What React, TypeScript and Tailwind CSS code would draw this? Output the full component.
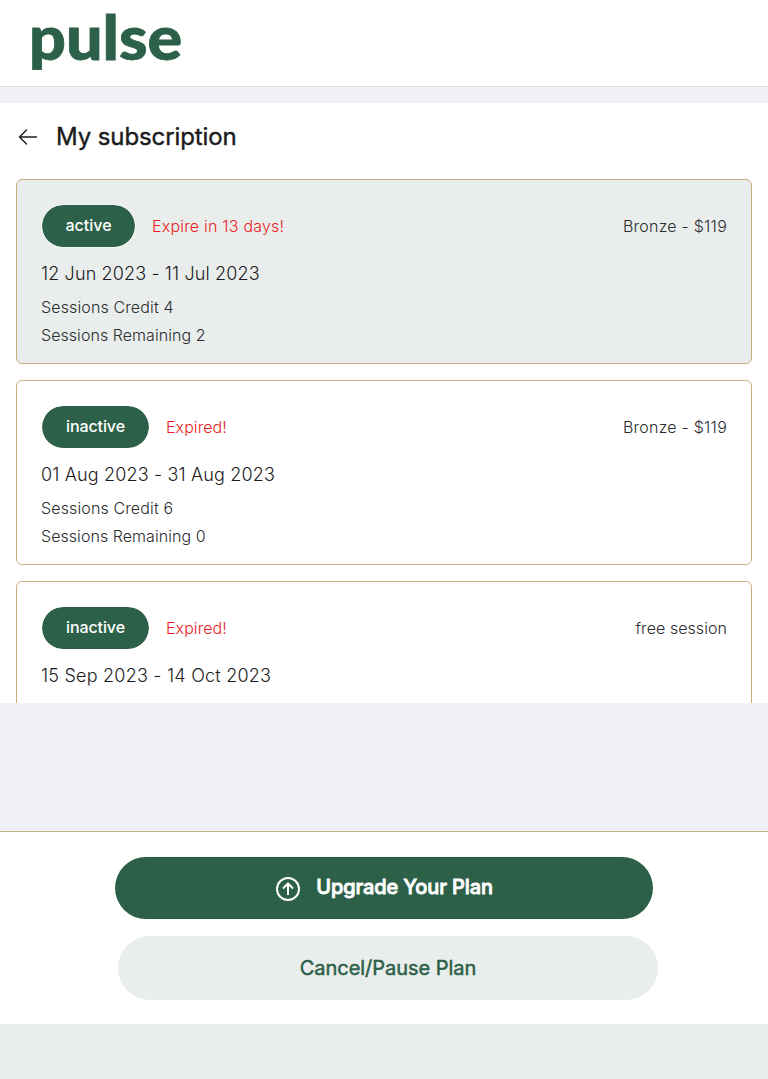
type Plan = {
  status: 'active' | 'inactive';
  notice: string;
  noticeClass: string;
  name: string;
  nameClass: string;
  period: string;
  periodClass: string;
  sessions?: { credit: number; remaining: number };
};

const plans: Plan[] = [
  {
    status: 'active',
    notice: 'Expire in 13 days!',
    noticeClass: 'tracking-[0.2px]',
    name: 'Bronze - $119',
    nameClass: 'tracking-[0.23px]',
    period: '12 Jun 2023 - 11 Jul 2023',
    periodClass: 'tracking-[0.13px]',
    sessions: { credit: 4, remaining: 2 },
  },
  {
    status: 'inactive',
    notice: 'Expired!',
    noticeClass: 'tracking-[0.07px]',
    name: 'Bronze - $119',
    nameClass: 'tracking-[0.23px]',
    period: '01 Aug 2023 - 31 Aug 2023',
    periodClass: 'tracking-[0.16px]',
    sessions: { credit: 6, remaining: 0 },
  },
  {
    status: 'inactive',
    notice: 'Expired!',
    noticeClass: 'tracking-[0.07px]',
    name: 'free session',
    nameClass: 'tracking-[0.06px]',
    period: '15 Sep 2023 - 14 Oct 2023',
    periodClass: 'tracking-[0.22px]',
  },
];

function PlanCard({ plan }: { plan: Plan }) {
  const active = plan.status === 'active';
  return (
    <article className={`h-[185px] shrink-0 rounded-md border border-[#c8ae7d] px-6 pt-6 ${active ? 'bg-[#e9eeec]' : 'bg-white'}`}>
      <div className="flex h-11 items-center">
        <span
          className={`flex h-11 items-center justify-center rounded-full border bg-[#2c6048] bg-clip-padding pb-0.5 text-base font-medium text-white ${
            active ? 'w-[95px] border-[#f4f7f5]' : 'w-[109px] border-white tracking-[-0.1px]'
          }`}
        >
          {plan.status}
        </span>
        <span className={`ml-4 text-base font-light text-[#eb1c24] ${plan.noticeClass}`}>{plan.notice}</span>
        <span className={`ml-auto text-base font-light text-[#2b2d30] ${plan.nameClass}`}>{plan.name}</span>
      </div>
      <p className={`mt-3 text-lg leading-7 font-light text-[#1c1c1c] ${plan.periodClass}`}>{plan.period}</p>
      {plan.sessions && (
        <div className="mt-[5px] text-base leading-7 font-light text-[#2b2d30]">
          <p className="tracking-[0.13px]">Sessions Credit {plan.sessions.credit}</p>
          <p className="tracking-[0.05px]">Sessions Remaining {plan.sessions.remaining}</p>
        </div>
      )}
    </article>
  );
}

export default function App() {
  return (
    <div className="flex h-[1079px] w-full flex-col overflow-hidden bg-[#f0f1f6] font-['Inter',sans-serif]">
      <header className="flex h-[87px] shrink-0 items-start border-b border-[#dfe1e7] bg-white pl-[29px]">
        <span className="origin-left scale-x-[1.06] font-['Lato',sans-serif] text-[61px] leading-[73px] font-black text-[#2c6048] [-webkit-text-stroke:0.8px_#2c6048]">
          pulse
        </span>
      </header>

      <main className="mt-4 flex h-[600px] shrink-0 flex-col overflow-hidden bg-white px-4">
        <div className="flex h-[76px] shrink-0 items-start pt-[18px]">
          <button aria-label="Back" className="flex h-8 w-6 items-center">
            <svg width="24" height="24" viewBox="0 0 24 24" fill="none" stroke="#1c1c1c" strokeWidth="1.4" strokeLinecap="round" strokeLinejoin="round">
              <path d="M20.5 12H3.5M10.5 5L3.5 12L10.5 19" />
            </svg>
          </button>
          <h1 className="ml-4 text-2xl leading-8 font-normal tracking-[-0.1px] text-[#1c1c1c] [-webkit-text-stroke:0.4px_#1c1c1c]">
            My subscription
          </h1>
        </div>
        <div className="flex flex-col gap-4">
          {plans.map((plan) => (
            <PlanCard key={plan.period} plan={plan} />
          ))}
        </div>
      </main>

      <footer className="mt-32 flex h-[193px] shrink-0 flex-col items-center border-t border-[#c3b58c] bg-white pt-[25px]">
        <button className="flex h-[62px] w-[538px] items-center justify-center rounded-full bg-[#2c6048] text-white">
          <svg className="mt-0.5" width="26" height="26" viewBox="0 0 26 26" fill="none" stroke="white" strokeWidth="2">
            <circle cx="13" cy="13" r="11" />
            <path d="M13 19V8M8 12.5L13 7.5L18 12.5" />
          </svg>
          <span className="ml-[15px] pb-0.5 text-xl font-medium tracking-[-0.12px] [-webkit-text-stroke:0.8px_white]">Upgrade Your Plan</span>
        </button>
        <button className="mt-[17px] ml-2 flex h-16 w-[540px] items-center justify-center rounded-full bg-[#e9eeec] text-xl font-normal tracking-[-0.04px] text-[#2c6048] [-webkit-text-stroke:0.5px_#2c6048]">
          Cancel/Pause Plan
        </button>
      </footer>
      <div className="flex-1 bg-[#e9eeec]" />
    </div>
  );
}
